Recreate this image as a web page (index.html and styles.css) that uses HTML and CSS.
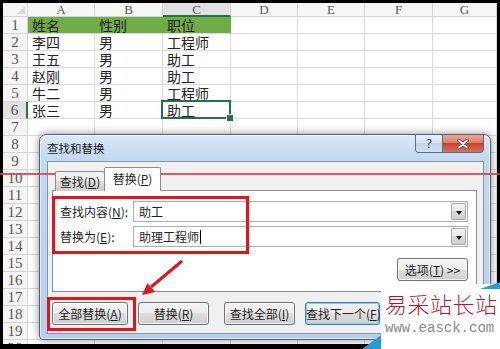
FILE: index.html
```html
<!DOCTYPE html>
<html lang="zh-CN">
<head>
  <meta charset="UTF-8">
  <title>查找和替换</title>
  <link rel="stylesheet" href="styles.css">
</head>
<body>
<div class="screen">

  <div class="sheet">
    <div class="hd corner"></div><div class="hd">A</div><div class="hd">B</div><div class="hd sel">C</div><div class="hd">D</div><div class="hd">E</div><div class="hd">F</div><div class="hd">G</div>
    <div class="rn">1</div><div class="green">姓名</div><div class="green">性别</div><div class="green">职位</div><div></div><div></div><div></div><div></div>
    <div class="rn">2</div><div>李四</div><div>男</div><div>工程师</div><div></div><div></div><div></div><div></div>
    <div class="rn">3</div><div>王五</div><div>男</div><div>助工</div><div></div><div></div><div></div><div></div>
    <div class="rn">4</div><div>赵刚</div><div>男</div><div>助工</div><div></div><div></div><div></div><div></div>
    <div class="rn">5</div><div>牛二</div><div>男</div><div>工程师</div><div></div><div></div><div></div><div></div>
    <div class="rn sel">6</div><div>张三</div><div>男</div><div class="cur">助工</div><div></div><div></div><div></div><div></div>
    <div class="rn">7</div><div></div><div></div><div></div><div></div><div></div><div></div><div></div>
    <div class="rn">8</div><div></div><div></div><div></div><div></div><div></div><div></div><div></div>
    <div class="rn">9</div><div></div><div></div><div></div><div></div><div></div><div></div><div></div>
    <div class="rn">10</div><div></div><div></div><div></div><div></div><div></div><div></div><div></div>
    <div class="rn">11</div><div></div><div></div><div></div><div></div><div></div><div></div><div></div>
    <div class="rn">12</div><div></div><div></div><div></div><div></div><div></div><div></div><div></div>
    <div class="rn">13</div><div></div><div></div><div></div><div></div><div></div><div></div><div></div>
    <div class="rn">14</div><div></div><div></div><div></div><div></div><div></div><div></div><div></div>
    <div class="rn">15</div><div></div><div></div><div></div><div></div><div></div><div></div><div></div>
    <div class="rn">16</div><div></div><div></div><div></div><div></div><div></div><div></div><div></div>
    <div class="rn">17</div><div></div><div></div><div></div><div></div><div></div><div></div><div></div>
    <div class="rn">18</div><div></div><div></div><div></div><div></div><div></div><div></div><div></div>
    <div class="rn">19</div><div></div><div></div><div></div><div></div><div></div><div></div><div></div>
    <div class="rn">20</div><div></div><div></div><div></div><div></div><div></div><div></div><div></div>
  </div>

  <div class="dialog">
    <div class="titlebar">查找和替换</div>
    <div class="caption">
      <div class="cap-btn help">?</div>
      <div class="cap-btn close">
        <svg width="14" height="10" viewBox="0 0 14 10">
          <path d="M3 1.5 L11 8.5 M11 1.5 L3 8.5" stroke="#5a2a22" stroke-width="3.4" stroke-linecap="round"/>
          <path d="M3 1.5 L11 8.5 M11 1.5 L3 8.5" stroke="#fff" stroke-width="2" stroke-linecap="round"/>
        </svg>
      </div>
    </div>

    <div class="client">
      <div class="tabs">
        <div class="tab">查找(<u>D</u>)</div>
        <div class="tab on">替换(<u>P</u>)</div>
      </div>
      <div class="panel">
        <div class="field">
          <label>查找内容(<u>N</u>):</label>
          <div class="combo"><span class="val">助工</span><span class="drop"></span></div>
        </div>
        <div class="field">
          <label>替换为(<u>E</u>):</label>
          <div class="combo"><span class="val">助理工程师<i class="caret"></i></span><span class="drop"></span></div>
        </div>
        <div class="opts-row">
          <button class="btn">选项(<u>T</u>) &gt;&gt;</button>
        </div>
      </div>
      <div class="actions">
        <button class="btn wide">全部替换(<u>A</u>)</button>
        <button class="btn">替换(<u>R</u>)</button>
        <button class="btn gap">查找全部(<u>I</u>)</button>
        <button class="btn default">查找下一个(<u>F</u>)</button>
      </div>
    </div>
  </div>

  <div class="redline"></div>
  <div class="mark mark-find"></div>
  <div class="mark mark-all"></div>
  <svg class="arrow" width="500" height="349" viewBox="0 0 500 349">
    <line x1="182" y1="261" x2="151" y2="287" stroke="#e3141c" stroke-width="3"/>
    <polygon points="142,295 147.5,283 155,292" fill="#e3141c"/>
  </svg>

  <div class="watermark">
    <div class="wm-cn">易采站长站</div>
    <div class="wm-url">www.easck.com</div>
  </div>

</div>
</body>
</html>
```

FILE: styles.css
```css
* {
  box-sizing: border-box;
}

body {
  margin: 0;
  background: #000;
  font-family: "Noto Sans CJK SC", sans-serif;
}

.screen {
  position: relative;
  width: 500px;
  height: 349px;
  overflow: hidden;
  background: #000;
}

/* spreadsheet */
.sheet {
  margin: 3px 3px 0;
  height: 341px;
  overflow: hidden;
  background: #fff;
  display: grid;
  grid-template-columns: 25px 67px 68px 68px 67px 67px 68px 64px;
  grid-template-rows: 14px;
  grid-auto-rows: 17px;
  font-size: 14px;
  color: #222;
}

.sheet > div {
  border-right: 1px solid #dadada;
  border-bottom: 1px solid #dadada;
  padding: 0 4px;
  line-height: 16px;
  white-space: nowrap;
}

.sheet .hd {
  background: #f5f5f5;
  border-color: #d4d4d4;
  text-align: center;
  font-family: "Liberation Serif", serif;
  font-size: 13px;
  line-height: 14px;
  color: #555;
}

.sheet .corner {
  position: relative;
}

.sheet .corner::after {
  content: "";
  position: absolute;
  right: 2px;
  bottom: 2px;
  width: 8px;
  height: 8px;
  background: #d8d8d8;
  clip-path: polygon(100% 0, 100% 100%, 0 100%);
}

.sheet .hd.sel {
  background: #e1e1e1;
  border-bottom: 2px solid #217346;
}

.sheet .rn {
  background: #f5f5f5;
  border-color: #d4d4d4;
  padding: 0;
  text-align: center;
  font-family: "Liberation Serif", serif;
  font-size: 15px;
  color: #555;
}

.sheet .rn.sel {
  background: #e1e1e1;
  border-right: 2px solid #217346;
}

.sheet .green {
  background: #70ad47;
  border-right-color: #70ad47;
}

.sheet .cur {
  position: relative;
}

.sheet .cur::before {
  content: "";
  position: absolute;
  left: -2px;
  top: -2px;
  right: -1px;
  bottom: -1px;
  border: 2px solid #217346;
}

.sheet .cur::after {
  content: "";
  position: absolute;
  right: -4px;
  bottom: -4px;
  width: 6px;
  height: 6px;
  background: #217346;
  border: 1px solid #fff;
}

/* dialog */
.dialog {
  position: absolute;
  left: 39px;
  top: 134px;
  width: 452px;
  height: 206px;
  border: 1px solid #4f627c;
  border-radius: 7px 7px 4px 4px;
  background: linear-gradient(180deg, #dbe8f7 0, #c3d8f0 24px, #b7cdea 100%);
  padding: 0 6px 5px 7px;
  display: flex;
  flex-direction: column;
  box-shadow: 0 0 9px rgba(0,0,0,0.45), inset 0 0 0 1px rgba(255,255,255,0.55);
  font-size: 12px;
  color: #1e1e1e;
}

.titlebar {
  height: 27px;
  display: flex;
  align-items: center;
  font-size: 11.5px;
  color: #1a1a1a;
}

.caption {
  position: absolute;
  top: 0;
  right: 6px;
  display: flex;
}

.cap-btn {
  height: 18px;
  border: 1px solid #5c6f88;
  border-top: none;
  display: flex;
  align-items: center;
  justify-content: center;
}

.help {
  width: 27px;
  border-right: none;
  border-radius: 0 0 0 4px;
  background: linear-gradient(180deg, #e6eff9 0, #d2e1f3 50%, #bdd2ec 50%, #cfe0f3 100%);
  font-family: "DejaVu Sans", sans-serif;
  font-size: 13px;
  color: #3b4b62;
  text-shadow: 0 0 2px #fff;
}

.close {
  width: 42px;
  border-radius: 0 0 4px 0;
  background: linear-gradient(180deg, #e9a897 0, #dc7762 50%, #c8432c 50%, #d8735b 100%);
}

.client {
  flex: 1;
  background: #f0f0f0;
  border: 1px solid #8496ae;
  padding: 5px 6px 8px 4px;
  display: flex;
  flex-direction: column;
}

.tabs {
  display: flex;
  align-items: flex-end;
  height: 24px;
  padding-left: 3px;
  margin-bottom: -1px;
  position: relative;
  z-index: 1;
}

.tab {
  width: 50px;
  height: 20px;
  border: 1px solid #898c95;
  border-bottom: none;
  border-radius: 2px 2px 0 0;
  background: linear-gradient(180deg, #f3f3f3 0, #ebebeb 50%, #dddddd 50%, #cfcfcf 100%);
  text-align: center;
  line-height: 19px;
}

.tab.on {
  width: 57px;
  height: 24px;
  margin-left: -1px;
  background: #fff;
  line-height: 22px;
}

.panel {
  height: 102px;
  background: #fff;
  border: 1px solid #898c95;
  padding: 10px 8px 0 7px;
}

.field {
  display: flex;
  align-items: center;
  height: 21px;
}

.field + .field {
  margin-top: 4px;
}

.field label {
  width: 73px;
}

.combo {
  flex: 1;
  height: 21px;
  border: 1px solid #abadb3;
  background: #fff;
  display: flex;
  padding: 1px;
}

.combo .val {
  flex: 1;
  padding-left: 4px;
  line-height: 17px;
}

.caret {
  display: inline-block;
  width: 1px;
  height: 14px;
  margin-left: 1px;
  background: #000;
  vertical-align: -2px;
}

.combo .drop {
  width: 15px;
  border: 1px solid #a5a5a5;
  border-radius: 2px;
  background: linear-gradient(180deg, #f4f4f4 0, #e8e8e8 50%, #dadada 50%, #d0d0d0 100%);
  position: relative;
}

.combo .drop::after {
  content: "";
  position: absolute;
  left: 4px;
  top: 7px;
  border: 3px solid transparent;
  border-top: 4px solid #111;
  border-bottom: none;
}

.opts-row {
  display: flex;
  justify-content: flex-end;
  margin-top: 11px;
}

.btn {
  width: 71px;
  height: 23px;
  padding: 0;
  border: 1px solid #707070;
  border-radius: 3px;
  background: linear-gradient(180deg, #f3f3f3 0, #ebebeb 50%, #dddddd 50%, #cfcfcf 100%);
  box-shadow: inset 0 0 0 1px rgba(255,255,255,0.7);
  font-family: "Noto Sans CJK SC", sans-serif;
  font-size: 12px;
  color: #1e1e1e;
  white-space: nowrap;
}

.actions {
  display: flex;
  gap: 10px;
  margin-top: 10px;
}

.actions .wide {
  width: 76px;
}

.actions .gap {
  margin-left: 5px;
}

.actions .default {
  width: 75px;
  border-color: #3c7fb1;
  box-shadow: inset 0 0 0 1px #7fd3f7;
}

/* annotations */
.redline {
  position: absolute;
  left: 0;
  right: 0;
  top: 173px;
  height: 2px;
  background: rgba(226, 60, 60, 0.85);
}

.mark {
  position: absolute;
  border: 3px solid #e3141c;
}

.mark-find {
  left: 52px;
  top: 196px;
  width: 197px;
  height: 58px;
}

.mark-all {
  left: 47px;
  top: 297px;
  width: 89px;
  height: 34px;
}

.arrow {
  position: absolute;
  left: 0;
  top: 0;
}

/* watermark */
.watermark {
  position: absolute;
  left: 381px;
  top: 284px;
  width: 119px;
  height: 65px;
  background: #fff;
  padding: 5px 0 0 4px;
}

.watermark::before {
  content: "";
  position: absolute;
  right: 0;
  top: -2px;
  width: 20px;
  height: 7px;
  background: #2b9ad6;
  clip-path: polygon(100% 0, 100% 100%, 0 100%);
}

.watermark::after {
  content: "";
  position: absolute;
  left: -19px;
  bottom: 0;
  width: 19px;
  height: 14px;
  background: #2b9ad6;
  clip-path: polygon(100% 0, 100% 100%, 0 100%);
}

.wm-cn {
  font-size: 22px;
  font-weight: 300;
  line-height: 28px;
  letter-spacing: 0.5px;
  color: #c8102e;
}

.wm-url {
  margin-top: 3px;
  font-family: "Liberation Mono", monospace;
  font-size: 14px;
  line-height: 16px;
  color: #8a8a8a;
}
```
